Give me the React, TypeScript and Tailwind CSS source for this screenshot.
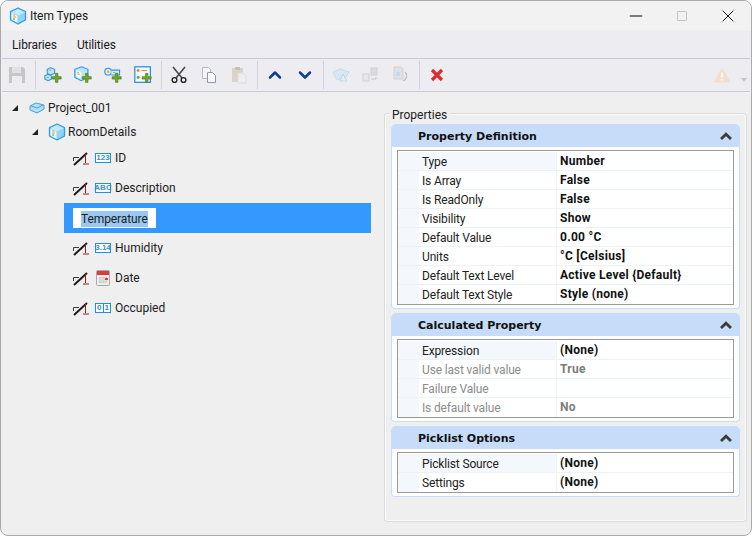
import type { ReactNode } from 'react';
import { ChevronUp, ChevronDown, Minus, X } from 'lucide-react';

const uiFont = "font-['Roboto','Open_Sans',sans-serif]";

function Cube({ size = 18 }: { size?: number }) {
  return (
    <svg width={size} height={size} viewBox="0 0 18 18">
      <path d="M9 1 16.5 4.5V13L9 17 1.5 13V4.5Z" fill="#8fd4f6" stroke="#2f9be0" strokeWidth="1.3" strokeLinejoin="round" />
      <path d="M2.5 5.2 9 2 15.5 5.2 9 8.5Z" fill="#c4e9fb" />
      <path d="M2.5 5.8 8.5 9V15.8L2.5 12.5Z" fill="#eef9fe" />
      <path d="M4 8h2M4 10h3" stroke="#e89a2a" strokeWidth="1" />
      <path d="M4 12h2" stroke="#58a82e" strokeWidth="1" />
    </svg>
  );
}

function Plus() {
  return <path d="M14 9h3v4h4v3h-4v4h-3v-4h-4v-3h4Z" fill="#6fa52c" stroke="#4b7d18" strokeWidth="0.8" />;
}

function AddIcon({ kind }: { kind: 'link' | 'cube' | 'key' | 'form' }) {
  return (
    <svg width="18" height="18" viewBox="0 0 22 22">
      {kind === 'link' && (
        <g>
          <path d="M8 2 13 4V9L8 11 4 9V4Z" fill="#bfe4f9" stroke="#2f9be0" strokeWidth="1.3" />
          <path d="M5 10 9 12V16L5 18 1 16V12Z" fill="#bfe4f9" stroke="#2f9be0" strokeWidth="1.3" />
          <path d="M6 5h3M3 14h3" stroke="#e89a2a" strokeWidth="1.2" />
        </g>
      )}
      {kind === 'cube' && (
        <g>
          <path d="M9 1 17 4V14L9 18 1 14V4Z" fill="#bfe4f9" stroke="#2f9be0" strokeWidth="1.4" />
          <path d="M3 5 9 8V16L3 13Z" fill="#eef9fe" />
          <path d="M4 8h2M4 10h3" stroke="#e89a2a" strokeWidth="1.2" />
        </g>
      )}
      {kind === 'key' && (
        <g>
          <circle cx="5" cy="7" r="4" fill="#eef9fe" stroke="#2f9be0" strokeWidth="1.5" />
          <path d="M9 5h10v6H9" fill="#cfeafa" stroke="#2f9be0" strokeWidth="1.4" />
          <circle cx="5" cy="7" r="1.5" fill="#e89a2a" />
          <path d="M11 8h3" stroke="#e89a2a" strokeWidth="1.2" />
        </g>
      )}
      {kind === 'form' && (
        <g>
          <rect x="1" y="1" width="19" height="19" fill="#f4fbff" stroke="#1f8fe0" strokeWidth="1.5" />
          <circle cx="5" cy="5.5" r="1.8" fill="#ef8a1d" />
          <path d="M9 5.5h7" stroke="#ef8a1d" strokeWidth="1.5" />
          <circle cx="5" cy="14" r="1.8" fill="#6fa52c" />
        </g>
      )}
      <Plus />
    </svg>
  );
}

function SaveIcon() {
  return (
    <svg width="18" height="18" viewBox="0 0 18 18">
      <path d="M1 1h14l2 2v14H1Z" fill="#c6c6c8" />
      <rect x="4" y="1" width="9" height="6" fill="#e2e2e4" />
      <rect x="4" y="10" width="10" height="7" fill="#ececee" />
    </svg>
  );
}

function CutIcon() {
  return (
    <svg width="16" height="18" viewBox="0 0 16 18" fill="none">
      <path d="M2 1 11 12M14 1 5 12" stroke="#4a4a4a" strokeWidth="1.6" />
      <circle cx="3.5" cy="14" r="2.4" stroke="#222" strokeWidth="1.4" />
      <circle cx="12.5" cy="14" r="2.4" stroke="#222" strokeWidth="1.4" />
    </svg>
  );
}

function CopyIcon() {
  return (
    <svg width="16" height="18" viewBox="0 0 16 18">
      <path d="M1.5 1.5h6l2 2v9h-8Z" fill="#f4f4f6" stroke="#b4bac2" />
      <path d="M6.5 6.5h5l3 3v7h-8Z" fill="#f8f8fa" stroke="#8f98a2" />
    </svg>
  );
}

function PasteIcon() {
  return (
    <svg width="16" height="18" viewBox="0 0 16 18">
      <rect x="1" y="2" width="11" height="14" fill="#dbd3c9" />
      <rect x="4" y="1" width="5" height="3" fill="#c6c0b8" />
      <path d="M7 7h5l3 3v7H7Z" fill="#eeeef0" stroke="#dcdce0" />
    </svg>
  );
}

function FadedBoxIcon() {
  return (
    <svg width="18" height="16" viewBox="0 0 18 16">
      <path d="M1 5 8 2 17 5 14 10 5 13Z" fill="#d8e8f2" stroke="#c4dcec" />
      <path d="M11 7 15 14H8Z" fill="#e4eff7" stroke="#b8d6ea" />
    </svg>
  );
}

function FadedSwapIcon() {
  return (
    <svg width="18" height="16" viewBox="0 0 18 16">
      <rect x="1" y="7" width="6" height="7" fill="#e8e8ec" stroke="#d0d0d6" />
      <rect x="9" y="1" width="6" height="7" fill="#dcdce0" stroke="#d0d0d6" />
      <path d="M9 12h5V10" fill="none" stroke="#c4c4c8" />
    </svg>
  );
}

function FadedRotateIcon() {
  return (
    <svg width="16" height="18" viewBox="0 0 16 18">
      <path d="M1 1h7l2 2v10H1Z" fill="#e0e0e4" stroke="#d0d0d6" />
      <rect x="3" y="6" width="4" height="4" fill="#bcdcf2" />
      <path d="M12 6c3 3 2 7-2 9" fill="none" stroke="#b8b8bc" strokeWidth="1.2" />
    </svg>
  );
}

function DeleteIcon() {
  return (
    <svg width="14" height="14" viewBox="0 0 14 14">
      <path d="M2 2 12 12M12 2 2 12" stroke="#e02b2b" strokeWidth="3.2" />
    </svg>
  );
}

function WarningIcon() {
  return (
    <svg width="18" height="16" viewBox="0 0 18 16">
      <path d="M9 1 17 15H1Z" fill="#f3dfcf" stroke="#f3dfcf" strokeLinejoin="round" />
      <path d="M9 5.5v5M9 12v1.6" stroke="#fff" strokeWidth="1.6" />
    </svg>
  );
}

function NoStyleIcon() {
  return (
    <svg width="18" height="16" viewBox="0 0 18 16" fill="none">
      <path d="M0.5 11V7.5H6" stroke="#3a3a3a" />
      <path d="M1 15 14 3" stroke="#1c1c1c" strokeWidth="2" />
      <path d="M12.5 3V13M10 14H16" stroke="#8f1d1d" />
    </svg>
  );
}

function TypeBadge({ children }: { children: ReactNode }) {
  return (
    <span className="flex h-[10px] w-[16px] items-center justify-center border border-[#1f8fe0] bg-white font-['Liberation_Sans',sans-serif] text-[8px] leading-none font-bold text-[#3b8fd0]">
      {children}
    </span>
  );
}

function DateIcon() {
  return (
    <svg width="14" height="16" viewBox="0 0 14 16">
      <rect x="0.5" y="0.5" width="13" height="15" rx="1" fill="#eeeeee" stroke="#a8a8a8" />
      <path d="M1 1h12v4H1Z" fill="#d83c3c" />
      <path d="M3 7h8v6H3Z" fill="#c8c8c8" />
      <path d="M3 9h8M3 11h8M6 7v6M9 7v6" stroke="#f4f4f4" strokeWidth="0.6" />
      <rect x="9" y="8" width="3" height="2" fill="#d83c3c" />
    </svg>
  );
}

function HeaderChevron() {
  return (
    <svg width="12" height="8" viewBox="0 0 12 8" fill="none">
      <path d="M1 7 6 2.2 11 7" stroke="#3c3c3c" strokeWidth="2.8" />
    </svg>
  );
}

function ToolButton({ children }: { children: ReactNode }) {
  return <div className="flex h-8 w-[30px] items-center justify-center">{children}</div>;
}

function ToolSep() {
  return <div className="mr-[2px] ml-[3px] h-7 w-px bg-[#d0d0da]" />;
}

function TreeRow({ icon, label }: { icon: ReactNode; label: string }) {
  return (
    <div className="flex h-[30px] items-center pl-[72px]">
      <NoStyleIcon />
      <div className="ml-[4px] flex w-[16px] justify-center">{icon}</div>
      <span className="ml-[4px] text-[#1d1d1d]">{label}</span>
    </div>
  );
}

type PropRow = { label: string; value: string; disabled?: boolean; active?: boolean };

function Section({ title, rows }: { title: string; rows: PropRow[] }) {
  return (
    <div>
      <div className="flex h-[23px] items-center justify-between rounded-t-[5px] bg-[#c6dcf8] pt-[1px] pr-[8px] pl-[27px]">
        <span className="pt-[3px] font-['DejaVu_Sans',sans-serif] text-[11px] font-bold text-[#111]">{title}</span>
        <HeaderChevron />
      </div>
      <div className="rounded-b-[4px] border border-t-0 border-[#c6dcf8] bg-white px-[5px] pt-[3px] pb-[3px]">
        <div className="border border-[#9a9a9a] pt-[1px]">
          {rows.map((row) => (
            <div key={row.label} className="flex h-[19px] border-b border-[#edf2f9] bg-[#f4f7fc] pl-[21px] last:border-b-0">
              <div
                className={`w-[137px] pl-[3px] leading-[21px] tracking-[-0.15px] ${row.disabled ? 'text-[#8c8c8c]' : 'text-[#222]'} ${row.active ? 'bg-[#f4f7fc]' : 'bg-white'}`}
              >
                {row.label}
              </div>
              <div
                className={`flex-1 border-l border-[#edf2f9] bg-white pl-[3px] leading-[19px] font-bold tracking-[0.28px] ${row.disabled ? 'text-[#7c7c7c]' : 'text-[#111]'}`}
              >
                {row.value}
              </div>
            </div>
          ))}
        </div>
      </div>
    </div>
  );
}

const definition: PropRow[] = [
  { label: 'Type', value: 'Number', active: true },
  { label: 'Is Array', value: 'False' },
  { label: 'Is ReadOnly', value: 'False' },
  { label: 'Visibility', value: 'Show' },
  { label: 'Default Value', value: '0.00 °C' },
  { label: 'Units', value: '°C [Celsius]' },
  { label: 'Default Text Level', value: 'Active Level {Default}' },
  { label: 'Default Text Style', value: 'Style (none)' },
];

const calculated: PropRow[] = [
  { label: 'Expression', value: '(None)', active: true },
  { label: 'Use last valid value', value: 'True', disabled: true },
  { label: 'Failure Value', value: '', disabled: true },
  { label: 'Is default value', value: 'No', disabled: true },
];

const picklist: PropRow[] = [
  { label: 'Picklist Source', value: '(None)', active: true },
  { label: 'Settings', value: '(None)' },
];

export default function App() {
  return (
    <div className={`${uiFont} flex h-[536px] w-[752px] flex-col overflow-hidden rounded-lg border border-[#ababab] bg-[#efefef] text-[12px]`}>
      <div className="flex h-[30px] shrink-0 items-center bg-[#f3f2f2] pl-[8px]">
        <Cube />
        <span className="ml-[3px] tracking-[-0.05px] text-[#1a1a1a]">Item Types</span>
        <div className="ml-auto flex items-center">
          <div className="flex w-[46px] justify-center">
            <Minus size={20} strokeWidth={1.2} className="text-black" />
          </div>
          <div className="flex w-[46px] justify-center">
            <div className="h-[10px] w-[10px] rounded-[1px] border border-[#c4c4c4]" />
          </div>
          <div className="flex w-[46px] justify-center">
            <X size={20} strokeWidth={1.1} className="text-black" />
          </div>
        </div>
      </div>

      <div className="flex h-[27px] shrink-0 items-center gap-[20px] bg-[#edecf1] pl-[11px] tracking-[-0.12px] text-[#1a1a1a]">
        <span>Libraries</span>
        <span>Utilities</span>
      </div>

      <div className="mx-px flex h-[34px] shrink-0 items-center border-y border-[#c9c9da] bg-[#edecf1] pr-[3px]">
        <ToolButton><SaveIcon /></ToolButton>
        <ToolSep />
        <ToolButton><AddIcon kind="link" /></ToolButton>
        <ToolButton><AddIcon kind="cube" /></ToolButton>
        <ToolButton><AddIcon kind="key" /></ToolButton>
        <ToolButton><AddIcon kind="form" /></ToolButton>
        <ToolSep />
        <ToolButton><CutIcon /></ToolButton>
        <ToolButton><CopyIcon /></ToolButton>
        <ToolButton><PasteIcon /></ToolButton>
        <ToolSep />
        <ToolButton><ChevronUp size={20} strokeWidth={3} className="text-[#0f3d8f]" /></ToolButton>
        <ToolButton><ChevronDown size={20} strokeWidth={3} className="text-[#0f3d8f]" /></ToolButton>
        <ToolSep />
        <ToolButton><FadedBoxIcon /></ToolButton>
        <ToolButton><FadedSwapIcon /></ToolButton>
        <ToolButton><FadedRotateIcon /></ToolButton>
        <ToolSep />
        <ToolButton><DeleteIcon /></ToolButton>
        <div className="ml-auto flex items-center">
          <WarningIcon />
          <div className="mt-[10px] ml-[10px] h-0 w-0 border-x-[3px] border-t-[4px] border-x-transparent border-t-[#c4c4c8]" />
        </div>
      </div>

      <div className="flex min-h-0 flex-1">
        <div className="w-[370px] shrink-0 pt-[4px]">
          <div className="flex h-[24px] items-center pl-[11px]">
            <div className="h-0 w-0 border-b-[6px] border-l-[6px] border-b-[#222] border-l-transparent" />
            <svg width="16" height="12" viewBox="0 0 16 12" className="ml-[11px]">
              <path d="M1 4 7 1l8 2v4L8 11 1 8Z" fill="#b5def7" stroke="#4a9fd8" />
              <path d="M2 4l6 2 6-3" fill="none" stroke="#4a9fd8" />
            </svg>
            <span className="ml-[3px] text-[#1d1d1d]">Project_001</span>
          </div>
          <div className="flex h-[23px] items-center pl-[31px]">
            <div className="h-0 w-0 border-b-[6px] border-l-[6px] border-b-[#222] border-l-transparent" />
            <div className="ml-[10px]"><Cube /></div>
            <span className="ml-[2px] text-[#1d1d1d]">RoomDetails</span>
          </div>
          <TreeRow icon={<TypeBadge>123</TypeBadge>} label="ID" />
          <TreeRow icon={<TypeBadge>ABC</TypeBadge>} label="Description" />
          <div className="ml-[63px] flex h-[30px] items-center bg-[#3399ff] pl-[9px]">
            <div className="flex h-[20px] w-[83px] items-center bg-white pt-[1px] pl-[8px]">
              <span className="bg-[#99c9f3] leading-[16px] tracking-[-0.1px] text-[#1d1d1d]">Temperature</span>
            </div>
          </div>
          <TreeRow icon={<TypeBadge>3.14</TypeBadge>} label="Humidity" />
          <TreeRow icon={<DateIcon />} label="Date" />
          <TreeRow
            icon={
              <TypeBadge>
                <span className="flex-1 text-center">0</span>
                <span className="flex-1 border-l border-[#1f8fe0] text-center">1</span>
              </TypeBadge>
            }
            label="Occupied"
          />
        </div>

        <div className="min-w-0 flex-1 pt-[22px] pr-[5px] pb-[14px] pl-[14px]">
          <div className="relative h-full rounded-[3px] border border-[#fafafa] px-[5px] pt-[9px] shadow-[0_0_0_1px_#dcdcdc]">
            <span className="absolute -top-[7px] left-[3px] bg-[#efefef] px-[3px] leading-[14px] text-[#222]">Properties</span>
            <div className="flex flex-col gap-[4px]">
              <Section title="Property Definition" rows={definition} />
              <Section title="Calculated Property" rows={calculated} />
              <Section title="Picklist Options" rows={picklist} />
            </div>
          </div>
        </div>
      </div>
    </div>
  );
}
